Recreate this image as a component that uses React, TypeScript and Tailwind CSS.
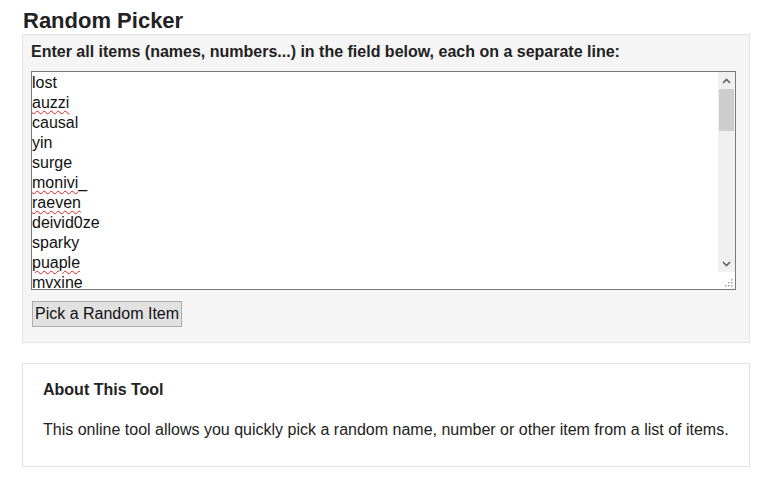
import React from 'react';

const ITEMS: { text: string; typo?: boolean }[] = [
  { text: 'lost' },
  { text: 'auzzi', typo: true },
  { text: 'causal' },
  { text: 'yin' },
  { text: 'surge' },
  { text: 'monivi', typo: true },
  { text: 'raeven', typo: true },
  { text: 'deivid0ze' },
  { text: 'sparky' },
  { text: 'puaple', typo: true },
  { text: 'mvxine', typo: true },
];

const FakeScrollbar: React.FC = () => (
  <div className="w-[17px] h-full bg-[#f0f0f0] flex flex-col items-center shrink-0">
    <div className="h-[17px] w-full flex items-center justify-center">
      <svg width="9" height="6" viewBox="0 0 9 6">
        <path d="M1 5 L4.5 1.5 L8 5" fill="none" stroke="#606060" strokeWidth="1.6" />
      </svg>
    </div>
    <div className="w-[15px] h-[42px] bg-[#cdcdcd]" />
    <div className="flex-1" />
    <div className="h-[17px] w-full flex items-center justify-center">
      <svg width="9" height="6" viewBox="0 0 9 6">
        <path d="M1 1 L4.5 4.5 L8 1" fill="none" stroke="#606060" strokeWidth="1.6" />
      </svg>
    </div>
    <div className="h-[17px] w-full bg-white flex items-end justify-end pr-[2px] pb-[2px]">
      <svg width="8" height="8" viewBox="0 0 8 8">
        <rect x="6" y="0" width="1.5" height="1.5" fill="#a0a0a0" />
        <rect x="3" y="3" width="1.5" height="1.5" fill="#a0a0a0" />
        <rect x="6" y="3" width="1.5" height="1.5" fill="#a0a0a0" />
        <rect x="0" y="6" width="1.5" height="1.5" fill="#a0a0a0" />
        <rect x="3" y="6" width="1.5" height="1.5" fill="#a0a0a0" />
        <rect x="6" y="6" width="1.5" height="1.5" fill="#a0a0a0" />
      </svg>
    </div>
  </div>
);

export default function App() {
  return (
    <div className="w-[784px] h-[502px] bg-white text-[#222] font-['Liberation_Sans',Arial,sans-serif] pl-[22px] pt-[8px]">
      <h1 className="text-[22px] font-bold leading-[26px] pl-[1px]">Random Picker</h1>

      <div className="w-[728px] bg-[#f5f5f5] border border-[#e3e3e3] px-[8px] pt-[8px] pb-[15px]">
        <label className="block text-[16px] font-bold leading-[18px] mb-[10px]">
          Enter all items (names, numbers...) in the field below, each on a separate line:
        </label>
        <div className="w-[705px] h-[219px] bg-white border border-[#7a7a7a] flex">
          <div className="flex-1 overflow-hidden pt-[1px] text-[16px] leading-5 text-[#111]">
            {ITEMS.map((item) => (
              <div key={item.text}>
                <span
                  className={item.typo ? 'underline decoration-wavy decoration-[#e02020] decoration-1 underline-offset-2' : ''}
                >
                  {item.text}
                </span>
                {item.text === 'monivi' ? '_' : ''}
              </div>
            ))}
          </div>
          <FakeScrollbar />
        </div>
        <button className="mt-[11px] ml-[1px] h-[26px] px-[2px] bg-[#e1e1e1] border border-[#adadad] text-[16px] leading-[20px] text-[#111]">
          Pick a Random Item
        </button>
      </div>

      <div className="w-[728px] mt-[20px] h-[104px] bg-white border border-[#e3e3e3] pl-[20px] pt-[16px]">
        <h2 className="text-[16px] font-bold leading-[20px]">About This Tool</h2>
        <p className="mt-[20px] text-[16px] leading-[20px] text-[#222]">
          This online tool allows you quickly pick a random name, number or other item from a list of items.
        </p>
      </div>
    </div>
  );
}
